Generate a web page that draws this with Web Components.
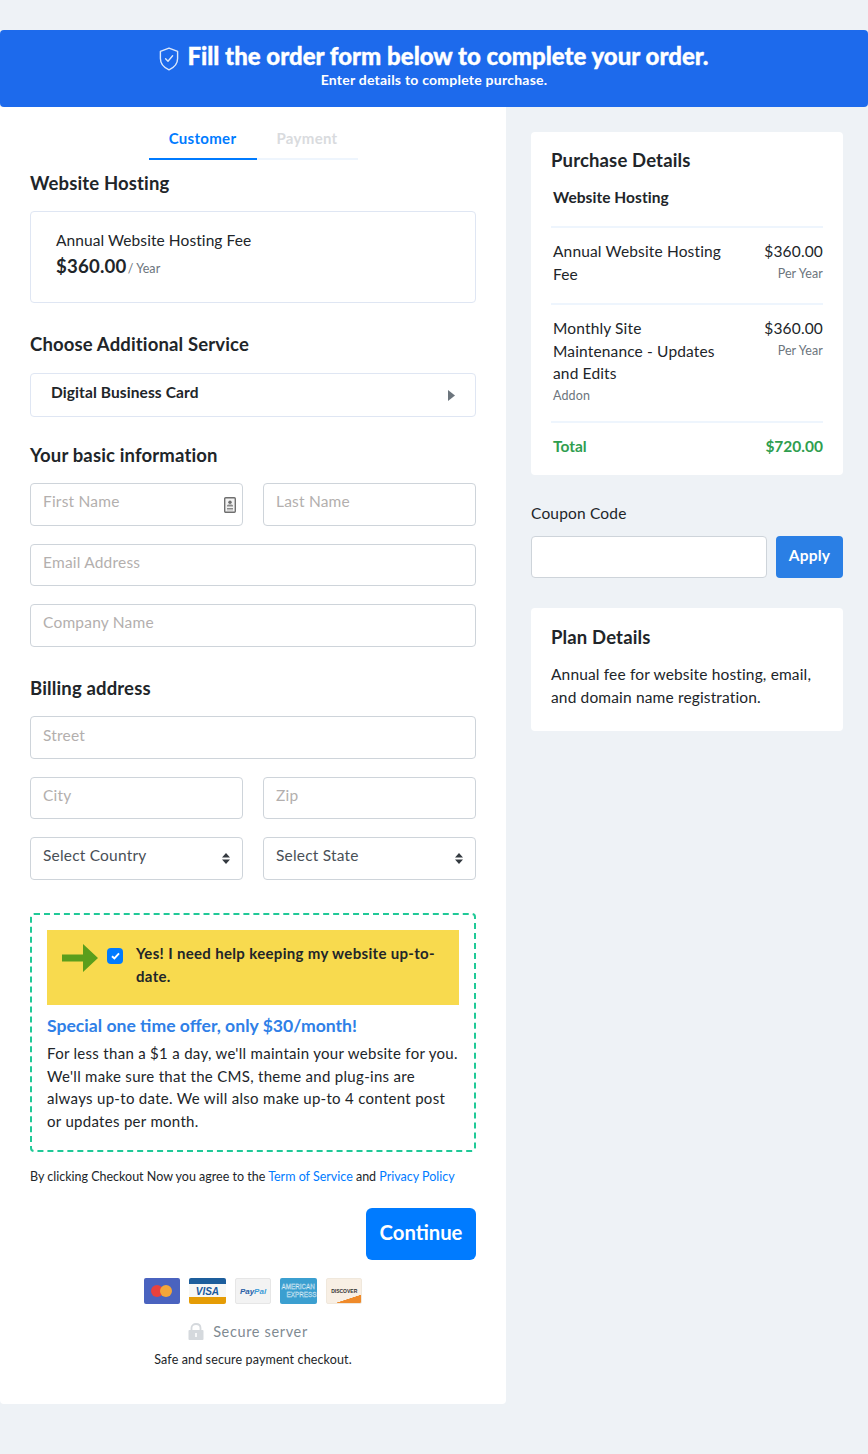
<!DOCTYPE html>
<html>
<head>
<meta charset="utf-8">
<title>Order</title>
<style>
html,body{margin:0;padding:0;background:#eef2f6;}
body{font-family:"Lato","Open Sans",sans-serif;color:#212529;font-size:16px;}
order-page{display:block;}
</style>
</head>
<body>
<order-page></order-page>

<script>
class OrderBanner extends HTMLElement{
  constructor(){
    super();
    this.attachShadow({mode:"open"});
  }
  connectedCallback(){
    this.shadowRoot.innerHTML = `
    <style>
      :host{display:block;height:77px;background:#1d6aec;border-radius:4px;color:#fff;text-align:center;box-sizing:border-box;padding-top:11px;}
      .top{display:flex;justify-content:center;align-items:center;gap:8px;height:29px;}
      h1{margin:0;font-size:24px;font-weight:900;line-height:29px;letter-spacing:0;-webkit-text-stroke:.35px #fff;}
      p{margin:1px 0 0;font-size:14px;font-weight:700;line-height:18px;letter-spacing:.24px;}
      svg{display:block;margin-top:6px;}
    </style>
    <div class="top">
      <svg width="20" height="24" viewBox="0 0 20 24" fill="none" stroke="#dce8fb" stroke-width="1.4" stroke-linejoin="round" stroke-linecap="round">
        <path d="M10 1.2 18.6 4.4V11.5C18.6 16.8 15 20.6 10 22.8 5 20.6 1.400 16.800 1.400 11.500V4.400Z"/>
        <path d="M6.600 11.800 9 14.300 13.600 8.800"/>
      </svg>
      <h1>Fill the order form below to complete your order.</h1>
    </div>
    <p>Enter details to complete purchase.</p>`;
  }
}

class StepTabs extends HTMLElement{
  constructor(){
    super();
    this.attachShadow({mode:"open"});
  }
  connectedCallback(){
    this.shadowRoot.innerHTML = `
    <style>
      :host{display:flex;justify-content:center;font-size:15px;font-weight:700;letter-spacing:.3px;}
      div{height:53px;line-height:63px;text-align:center;box-sizing:border-box;}
      .on{width:108px;color:#007bff;border-bottom:2px solid #007bff;}
      .off{width:101px;color:#d9dbde;border-bottom:2px solid #eef5fd;}
    </style>
    <div class="on">Customer</div>
    <div class="off">Payment</div>`;
  }
}

class SectionTitle extends HTMLElement{
  constructor(){
    super();
    this.attachShadow({mode:"open"});
  }
  connectedCallback(){
    this.shadowRoot.innerHTML = `
    <style>
      :host{display:block;font-size:18.500px;font-weight:700;line-height:24px;color:#212529;letter-spacing:.15px;}
    </style>
    <slot></slot>`;
  }
}

class TextField extends HTMLElement{
  constructor(){
    super();
    this.attachShadow({mode:"open"});
  }
  connectedCallback(){
    const icon = this.hasAttribute("icon") ? `
      <svg class="ic" width="12" height="16" viewBox="0 0 12 16">
        <rect x=".7" y=".7" width="10.600" height="14.600" rx="1" fill="#f2f2f2" stroke="#6f6f6f" stroke-width="1.400"/>
        <circle cx="6" cy="5.200" r="1.700" fill="#6f6f6f"/>
        <path d="M3 9.400h6V8.600C9 7.800 8 7.400 6 7.400S3 7.800 3 8.600ZM3 11h6v1H3ZM3 12.500h6v.8H3Z" fill="#8a8a8a"/>
      </svg>` : "";
    const caret = this.hasAttribute("select") ? `
      <svg class="car" width="8" height="11" viewBox="0 0 8 11"><path d="M4 0 8 4.500H0ZM0 6.500H8L4 11Z" fill="#343a40"/></svg>` : "";
    const h = this.getAttribute("h") || "43";
    this.shadowRoot.innerHTML = `
    <style>
      :host{display:block;position:relative;box-sizing:border-box;height:${h}px;background:#fff;border:1px solid #ced4da;border-radius:4px;padding:0 12px;
        font-size:15.500px;line-height:35px;color:#b3afae;letter-spacing:.2px;}
      :host([select]){color:#495057;}
      .ic{position:absolute;right:6px;top:13px;}
      .car{position:absolute;right:12px;top:15px;}
    </style>
    <slot></slot>${icon}${caret}`;
  }
}

class PriceRow extends HTMLElement{
  constructor(){
    super();
    this.attachShadow({mode:"open"});
  }
  connectedCallback(){
    this.shadowRoot.innerHTML = `
    <style>
      :host{display:flex;justify-content:space-between;padding:12px 0 0 2px;border-top:2px solid #eef5fd;font-size:15.500px;line-height:22.600px;color:#212529;letter-spacing:.15px;box-sizing:border-box;}
      .name{width:175px;}
      .amt{text-align:right;}
      small{display:block;font-size:12.500px;line-height:22px;color:#6c757d;letter-spacing:.1px;}
    </style>
    <div class="name"><slot name="name"></slot></div>
    <div class="amt">${this.getAttribute("amount")}<small>Per Year</small></div>`;
  }
}

class PanelCard extends HTMLElement{
  constructor(){
    super();
    this.attachShadow({mode:"open"});
  }
  connectedCallback(){
    this.shadowRoot.innerHTML = `
    <style>
      :host{display:block;background:#fff;border-radius:4px;box-sizing:border-box;padding:17px 20px 0;}
    </style>
    <slot></slot>`;
  }
}

class OfferBox extends HTMLElement{
  constructor(){
    super();
    this.attachShadow({mode:"open"});
  }
  connectedCallback(){
    this.shadowRoot.innerHTML = `
    <style>
      :host{display:block;box-sizing:border-box;height:239px;border:2px dashed #20c997;border-radius:4px;padding:15px;font-size:15px;line-height:22.600px;color:#212529;letter-spacing:.3px;}
      .yes{display:flex;height:75px;box-sizing:border-box;background:#f8da4e;padding:12px 20px 0 15px;font-weight:700;letter-spacing:.33px;}
      .yes svg{flex:none;display:block;margin-top:2px;}
      .check{flex:none;width:16px;height:16px;border-radius:4px;background:#007bff;margin:6px 13px 0 9px;display:flex;align-items:center;justify-content:center;}
      h3{margin:9px 0 4px;font-size:17.600px;line-height:24px;font-weight:700;color:#2f80e7;letter-spacing:0;}
      p{margin:0;}
    </style>
    <div class="yes">
      <svg width="36" height="28" viewBox="0 0 36 28"><path d="M0 10.500H21V0L36 14 21 28V17.500H0Z" fill="#5a9e1c"/></svg>
      <span class="check"><svg style="margin:0" width="9" height="8" viewBox="0 0 9 8"><path d="M1 4.200 3.400 6.500 8 1.300" fill="none" stroke="#fff" stroke-width="1.900"/></svg></span>
      <span>Yes! I need help keeping my website up-to-date.</span>
    </div>
    <h3>Special one time offer, only $30/month!</h3>
    <p>For less than a $1 a day, we'll maintain your website for you. We'll make sure that the CMS, theme and plug-ins are always up-to date. We will also make up-to 4 content post or updates per month.</p>`;
  }
}

class PayCards extends HTMLElement{
  constructor(){
    super();
    this.attachShadow({mode:"open"});
  }
  connectedCallback(){
    this.shadowRoot.innerHTML = `
    <style>
      :host{display:flex;justify-content:center;gap:9.100px;height:26px;font-family:"Liberation Sans",sans-serif;}
      .c{width:36.500px;height:26px;border-radius:2px;box-sizing:border-box;overflow:hidden;display:flex;align-items:center;justify-content:center;white-space:nowrap;}
      .mc{background:#4a63bf;}
      .mc i{width:12px;height:12px;border-radius:50%;display:block;}
      .visa{background:linear-gradient(#1d5e9c 0 6px,#f7f7f5 6px 19px,#e59c05 19px);color:#1a5a9e;font-size:10px;font-weight:700;font-style:italic;}
      .pp{background:#f3f3f3;border:1px solid #e6e6e6;color:#2a5ea5;font-size:8px;font-weight:700;font-style:italic;}
      .pp b{color:#3c9bd8;}
      .ax{background:#3b9fd0;color:#3b9fd0;-webkit-text-stroke:.3px #e8f3f9;font-size:6.300px;line-height:8px;}
      .ax span{display:block;margin-left:1px;}
      .ax span+span{margin-left:6px;}
      .ax div{width:36px;}
      .ds{background:linear-gradient(162deg,#f8efe4 0 76%,#ef8a2a 77%);color:#333;font-size:5px;font-weight:700;border:1px solid #f0e8dc;}
    </style>
    <div class="c mc"><i style="background:#e8413d"></i><i style="background:#f3a63a;margin-left:-3px"></i></div>
    <div class="c visa">VISA</div>
    <div class="c pp"><span>Pay<b>Pal</b></span></div>
    <div class="c ax"><div><span>AMERICAN</span><span>EXPRESS</span></div></div>
    <div class="c ds">DISCOVER</div>`;
  }
}

class OrderPage extends HTMLElement{
  constructor(){
    super();
    this.attachShadow({mode:"open"});
  }
  connectedCallback(){
    this.shadowRoot.innerHTML = `
    <style>
      :host{display:block;padding:30px 0 50px;font-family:"Lato","Open Sans",sans-serif;color:#212529;}
      .main{display:flex;align-items:stretch;}
      .left{width:506px;height:1297px;box-sizing:border-box;background:#fff;padding:0 30px;border-radius:0 0 4px 4px;}
      .right{flex:1;padding:25px 25px 0;}
      .hostbox{margin-top:16px;height:92px;box-sizing:border-box;border:1px solid #dfe6f3;border-radius:4px;padding:16px 25px;font-size:15.500px;line-height:24px;letter-spacing:.08px;}
      .price{font-size:18.600px;font-weight:700;line-height:28px;letter-spacing:.2px;}
      .price span{font-size:12.500px;font-weight:400;color:#6c757d;letter-spacing:.05px;margin-left:-2px;}
      .service{margin-top:17px;height:44px;box-sizing:border-box;border:1px solid #dfe6f3;border-radius:4px;padding:0 20px;display:flex;justify-content:space-between;align-items:center;font-size:15.500px;font-weight:700;letter-spacing:.1px;}
      .service span{position:relative;top:-3px;}
      .two{display:grid;grid-template-columns:213px 213px;column-gap:20px;}
      .terms{margin-top:16px;font-size:12.500px;line-height:18px;letter-spacing:0;}
      .terms a{color:#007bff;text-decoration:none;}
      .go{display:flex;justify-content:flex-end;margin-top:22px;}
      .btn{background:#007bff;color:#fff;border-radius:6px;width:110px;height:52px;line-height:48px;text-align:center;font-size:20.300px;font-weight:700;}
      .secure{margin-top:15px;padding-right:10px;display:flex;justify-content:center;align-items:center;gap:9px;color:#7f8a92;font-size:14.500px;letter-spacing:.65px;height:24px;}
      .safe{margin-top:8px;text-align:center;font-size:12.500px;line-height:18px;letter-spacing:.13px;}
      .lbl{font-size:15.500px;line-height:22px;letter-spacing:.18px;}
      .lbl2{font-weight:700;padding-left:2px;margin-top:14px;height:40px;font-size:15.500px;line-height:22px;letter-spacing:.05px;}
      .total{display:flex;justify-content:space-between;border-top:2px solid #eef5fd;padding:12px 0 0 2px;color:#2f9e4f;font-size:15.500px;font-weight:700;line-height:22px;}
      .addon{font-size:12.500px;color:#6c757d;line-height:21px;display:block;}
      .coupon{display:grid;grid-template-columns:236px 67px;column-gap:9px;margin-top:12px;}
      .box{height:42px;background:#fff;border:1px solid #ced4da;border-radius:4px;box-sizing:border-box;}
      .apply{height:42px;background:#2a7fe5;color:#fff;border-radius:4px;text-align:center;line-height:39px;font-size:15.500px;font-weight:700;letter-spacing:.2px;}
      .plan{margin-top:14px;font-size:15.500px;line-height:22.600px;letter-spacing:.15px;}
    </style>
    <order-banner></order-banner>
    <div class="main">
      <div class="left">
        <step-tabs></step-tabs>
        <section-title style="margin-top:11px">Website Hosting</section-title>
        <div class="hostbox">Annual Website Hosting Fee
          <div class="price">$360.00<span> / Year</span></div>
        </div>
        <section-title style="margin-top:29px">Choose Additional Service</section-title>
        <div class="service"><span>Digital Business Card</span>
          <svg width="7" height="11" viewBox="0 0 7 11"><path d="M0 0 7 5.500 0 11Z" fill="#6c757d"/></svg>
        </div>
        <section-title style="margin-top:26px">Your basic information</section-title>
        <div class="two" style="margin-top:16px">
          <text-field icon>First Name</text-field>
          <text-field>Last Name</text-field>
        </div>
        <text-field style="margin-top:18px" h="42">Email Address</text-field>
        <text-field style="margin-top:18px">Company Name</text-field>
        <section-title style="margin-top:29px">Billing address</section-title>
        <text-field style="margin-top:16px;line-height:36px">Street</text-field>
        <div class="two" style="margin-top:18px">
          <text-field h="42">City</text-field>
          <text-field h="42">Zip</text-field>
        </div>
        <div class="two" style="margin-top:18px">
          <text-field select>Select Country</text-field>
          <text-field select>Select State</text-field>
        </div>
        <offer-box style="margin-top:33px"></offer-box>
        <div class="terms">By clicking Checkout Now you agree to the <a>Term of Service</a> and <a>Privacy Policy</a></div>
        <div class="go"><div class="btn">Continue</div></div>
        <pay-cards style="margin-top:18px"></pay-cards>
        <div class="secure">
          <svg width="16" height="17" viewBox="0 0 16 17"><path d="M3.500 7V5C3.500 2.500 5.500 1 8 1s4.500 1.500 4.500 4V7" fill="none" stroke="#d5d9dd" stroke-width="1.800"/><rect x=".5" y="7" width="15" height="10" rx="1" fill="#d5d9dd"/><rect x="7.200" y="10" width="1.600" height="4" fill="#fff"/></svg>
          <span>Secure server</span>
        </div>
        <div class="safe">Safe and secure payment checkout.</div>
      </div>
      <div class="right">
        <panel-card style="height:343px;padding-top:16px">
          <section-title>Purchase Details</section-title>
          <div class="lbl2">Website Hosting</div>
          <price-row amount="$360.00" style="height:77px"><span slot="name">Annual Website Hosting Fee</span></price-row>
          <price-row amount="$360.00" style="height:118px"><span slot="name">Monthly Site Maintenance - Updates and Edits<span class="addon">Addon</span></span></price-row>
          <div class="total"><span>Total</span><span>$720.00</span></div>
        </panel-card>
        <div class="lbl" style="margin-top:27px">Coupon Code</div>
        <div class="coupon"><div class="box"></div><div class="apply">Apply</div></div>
        <panel-card style="height:123px;margin-top:30px">
          <section-title>Plan Details</section-title>
          <div class="plan">Annual fee for website hosting, email, and domain name registration.</div>
        </panel-card>
      </div>
    </div>`;
  }
}

customElements.define("order-banner",OrderBanner);
customElements.define("step-tabs",StepTabs);
customElements.define("section-title",SectionTitle);
customElements.define("text-field",TextField);
customElements.define("price-row",PriceRow);
customElements.define("panel-card",PanelCard);
customElements.define("offer-box",OfferBox);
customElements.define("pay-cards",PayCards);
customElements.define("order-page",OrderPage);
</script>
</body>
</html>
